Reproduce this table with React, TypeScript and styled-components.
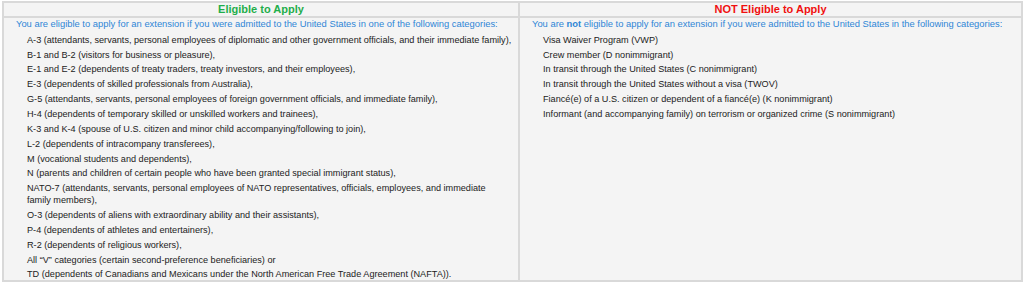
import React from "react";
import styled, { createGlobalStyle } from "styled-components";

const Global = createGlobalStyle`
  html, body { margin: 0; padding: 0; background: #ffffff; }
  body { font-family: "Liberation Sans", Arial, sans-serif; }
`;

const Page = styled.div`
  padding: 1px 0 0 2px;
  width: 1024px;
  box-sizing: border-box;
`;

const Table = styled.div`
  display: grid;
  grid-template-columns: 514px 501px;
  gap: 2px;
  padding: 2px;
  background: #d9d9d9;
  width: max-content;
`;

const Header = styled.div<{ $tone: "good" | "bad" }>`
  background: #f4f4f4;
  text-align: center;
  font-weight: bold;
  font-size: 11px;
  line-height: 13px;
  height: 13px;
  color: ${(p) => (p.$tone === "good" ? "#1fae4b" : "#f01010")};
`;

const Cell = styled.div`
  background: #f4f4f4;
  padding: 0 3px 0 12px;
  font-size: 9.15px;
  line-height: 12px;
  color: #222;
`;

const Intro = styled.div`
  color: #2f86d6;
  font-size: 9.4px;
  margin-bottom: 3.8px;
  b { font-weight: bold; }
`;

const List = styled.ul`
  list-style: none;
  margin: 0;
  padding: 0 0 0 11px;
`;

const Item = styled.li`
  margin-bottom: 2.85px;
  &:last-child { margin-bottom: 0; }
`;

const eligible = [
  "A-3 (attendants, servants, personal employees of diplomatic and other government officials, and their immediate family),",
  "B-1 and B-2 (visitors for business or pleasure),",
  "E-1 and E-2 (dependents of treaty traders, treaty investors, and their employees),",
  "E-3 (dependents of skilled professionals from Australia),",
  "G-5 (attendants, servants, personal employees of foreign government officials, and immediate family),",
  "H-4 (dependents of temporary skilled or unskilled workers and trainees),",
  "K-3 and K-4 (spouse of U.S. citizen and minor child accompanying/following to join),",
  "L-2 (dependents of intracompany transferees),",
  "M (vocational students and dependents),",
  "N (parents and children of certain people who have been granted special immigrant status),",
  "NATO-7 (attendants, servants, personal employees of NATO representatives, officials, employees, and immediate family\u00a0members),",
  "O-3 (dependents of aliens with extraordinary ability and their assistants),",
  "P-4 (dependents of athletes and entertainers),",
  "R-2 (dependents of religious workers),",
  "All \u201cV\u201d categories (certain second-preference beneficiaries) or",
  "TD (dependents of Canadians and Mexicans under the North American Free Trade Agreement (NAFTA)).",
];

const notEligible = [
  "Visa Waiver Program (VWP)",
  "Crew member (D nonimmigrant)",
  "In transit through the United States (C nonimmigrant)",
  "In transit through the United States without a visa (TWOV)",
  "Fianc\u00e9(e) of a U.S. citizen or dependent of a fianc\u00e9(e) (K nonimmigrant)",
  "Informant (and accompanying family) on terrorism or organized crime (S nonimmigrant)",
];

export default function App() {
  return (
    <>
      <Global />
      <Page>
        <Table>
          <Header $tone="good">Eligible to Apply</Header>
          <Header $tone="bad">NOT Eligible to Apply</Header>
          <Cell>
            <Intro>
              You are eligible to apply for an extension if you were admitted to the United States in one of the following categories:
            </Intro>
            <List>
              {eligible.map((t) => (
                <Item key={t}>{t}</Item>
              ))}
            </List>
          </Cell>
          <Cell>
            <Intro>
              You are <b>not</b> eligible to apply for an extension if you were admitted to the United States in the following categories:
            </Intro>
            <List>
              {notEligible.map((t) => (
                <Item key={t}>{t}</Item>
              ))}
            </List>
          </Cell>
        </Table>
      </Page>
    </>
  );
}
